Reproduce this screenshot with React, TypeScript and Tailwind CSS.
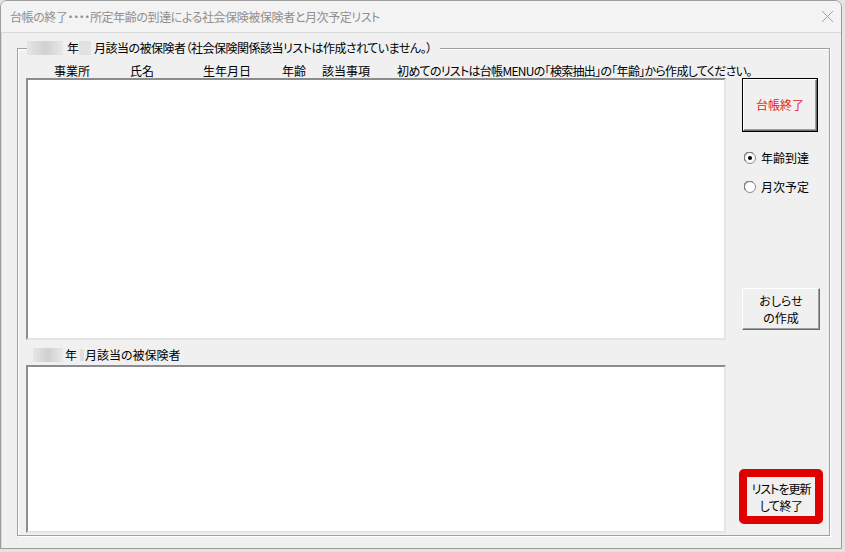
import { X } from 'lucide-react';

const font = "font-['Noto_Sans_CJK_JP','Noto_Sans',sans-serif] [font-feature-settings:'palt']";

function Radio({ checked, label }: { checked: boolean; label: string }) {
  return (
    <div className="flex items-center h-[16px] pl-[2px]">
      <svg width="12" height="12" viewBox="0 0 12 12">
        <circle cx="6" cy="6" r="5.5" fill="#fff" stroke="#8a8a8a" />
        <path d="M1.5 9 A5 5 0 0 1 9 1.5" fill="none" stroke="#6b6b6b" />
        {checked && <circle cx="6" cy="6" r="2" fill="#000" />}
      </svg>
      <span className="ml-[5px] text-[12px] leading-[16px] text-black">{label}</span>
    </div>
  );
}

function Blur({ w, light }: { w: number; light?: boolean }) {
  return (
    <span
      className={`inline-block h-[14px] align-middle ${
        light ? 'bg-[#e2e2e2]' : 'bg-gradient-to-r from-[#e6e6e6] via-[#d0d0d0] to-[#e8e8e8]'
      }`}
      style={{ width: w }}
    />
  );
}

export default function App() {
  return (
    <div className={`min-h-screen bg-[#e4e4e4] ${font}`}>
      <div className="w-[842px] h-[549px] bg-[#f0f0f0] border border-[#9c9c9c] rounded-t-[7px] flex flex-col overflow-hidden">
        {/* Title bar */}
        <div className="h-[31px] flex items-center justify-between pl-[9px] pr-[3px] bg-[#f3f3f3]">
          <span className="text-[12px] text-[#8f8f8f] tracking-[-0.4px]">
            台帳の終了・・・・所定年齢の到達による社会保険被保険者と月次予定リスト
          </span>
          <X className="w-[21px] h-[21px] text-[#9a9a9a]" strokeWidth={1} />
        </div>

        {/* Client area */}
        <div className="flex-1 border-t border-l border-[#d8d8d8] pl-[15px] pr-[11px] pt-[7px] pb-[12px]">
          <fieldset className="border border-[#a0a0a0] shadow-[inset_1px_1px_0_#fff,1px_1px_0_#fff] h-full pl-[8px]">
            <legend className="ml-[1px] pr-[8px] bg-[#f0f0f0] text-[12px] leading-[16px] text-black whitespace-nowrap flex items-center">
              <Blur w={36} />
              <span className="ml-[4px]">年</span>
              <Blur w={12} light />
              <span className="ml-[3px] tracking-[-0.5px]">月該当の被保険者（社会保険関係該当リストは作成されていません。）</span>
            </legend>

            {/* Header row */}
            <div className="mt-[8px] h-[14px] flex text-[12px] leading-[14px] text-black whitespace-nowrap pl-[28px]">
              <span className="w-[76px]">事業所</span>
              <span className="w-[73px]">氏名</span>
              <span className="w-[79px]">生年月日</span>
              <span className="w-[40px]">年齢</span>
              <span className="w-[75px]">該当事項</span>
              <span className="tracking-[-0.7px]">初めてのリストは台帳MENUの「検索抽出」の「年齢」から作成してください。</span>
            </div>

            <div className="flex">
              {/* Left column: lists */}
              <div className="w-[700px] flex flex-col">
                <div className="h-[262px] bg-white border-2 border-t-[#8c8c8c] border-l-[#8c8c8c] border-r-[#e4e4e4] border-b-[#e4e4e4]" />
                <div className="mt-[8px] mb-[3px] h-[14px] flex items-center text-[12px] leading-[14px] text-black pl-[7px]">
                  <Blur w={30} />
                  <span className="ml-[2px]">年</span>
                  <span className="inline-block w-[4px] h-[12px] ml-[3px] bg-[#e0e0e0]" />
                  <span className="ml-[1px]">月該当の被保険者</span>
                </div>
                <div className="h-[168px] bg-white border-2 border-t-[#8c8c8c] border-l-[#8c8c8c] border-r-[#e4e4e4] border-b-[#e4e4e4]" />
              </div>

              {/* Right column: controls */}
              <div className="flex flex-col pl-[16px]">
                <button className="w-[76px] h-[54px] border border-black bg-[#f0f0f0] flex items-center justify-center">
                  <span className="w-full h-full flex items-center justify-center border border-t-white border-l-white border-r-[#696969] border-b-[#696969] shadow-[inset_-1px_-1px_0_#a0a0a0] text-[12px] text-[#e81c1c]">
                    台帳終了
                  </span>
                </button>

                <div className="mt-[18px] flex flex-col gap-[13px]">
                  <Radio checked label="年齢到達" />
                  <Radio checked={false} label="月次予定" />
                </div>

                <button className="mt-[93px] w-[78px] h-[42px] bg-[#f0f0f0] border border-t-white border-l-white border-r-[#696969] border-b-[#696969] shadow-[inset_-1px_-1px_0_#a0a0a0] text-[12px] leading-[17px] text-black flex flex-col items-center justify-center">
                  <span>おしらせ</span>
                  <span>の作成</span>
                </button>

                <button className="mt-[139px] -ml-[3px] w-[84px] h-[55px] rounded-[5px] border-[8px] border-[#e00000] bg-[#f0f0f0] text-[12px] leading-[17px] text-black flex flex-col items-center justify-center whitespace-nowrap">
                  <span className="tracking-[-1px]">リストを更新</span>
                  <span className="tracking-[-0.5px]">して終了</span>
                </button>
              </div>
            </div>
          </fieldset>
        </div>
      </div>
    </div>
  );
}
